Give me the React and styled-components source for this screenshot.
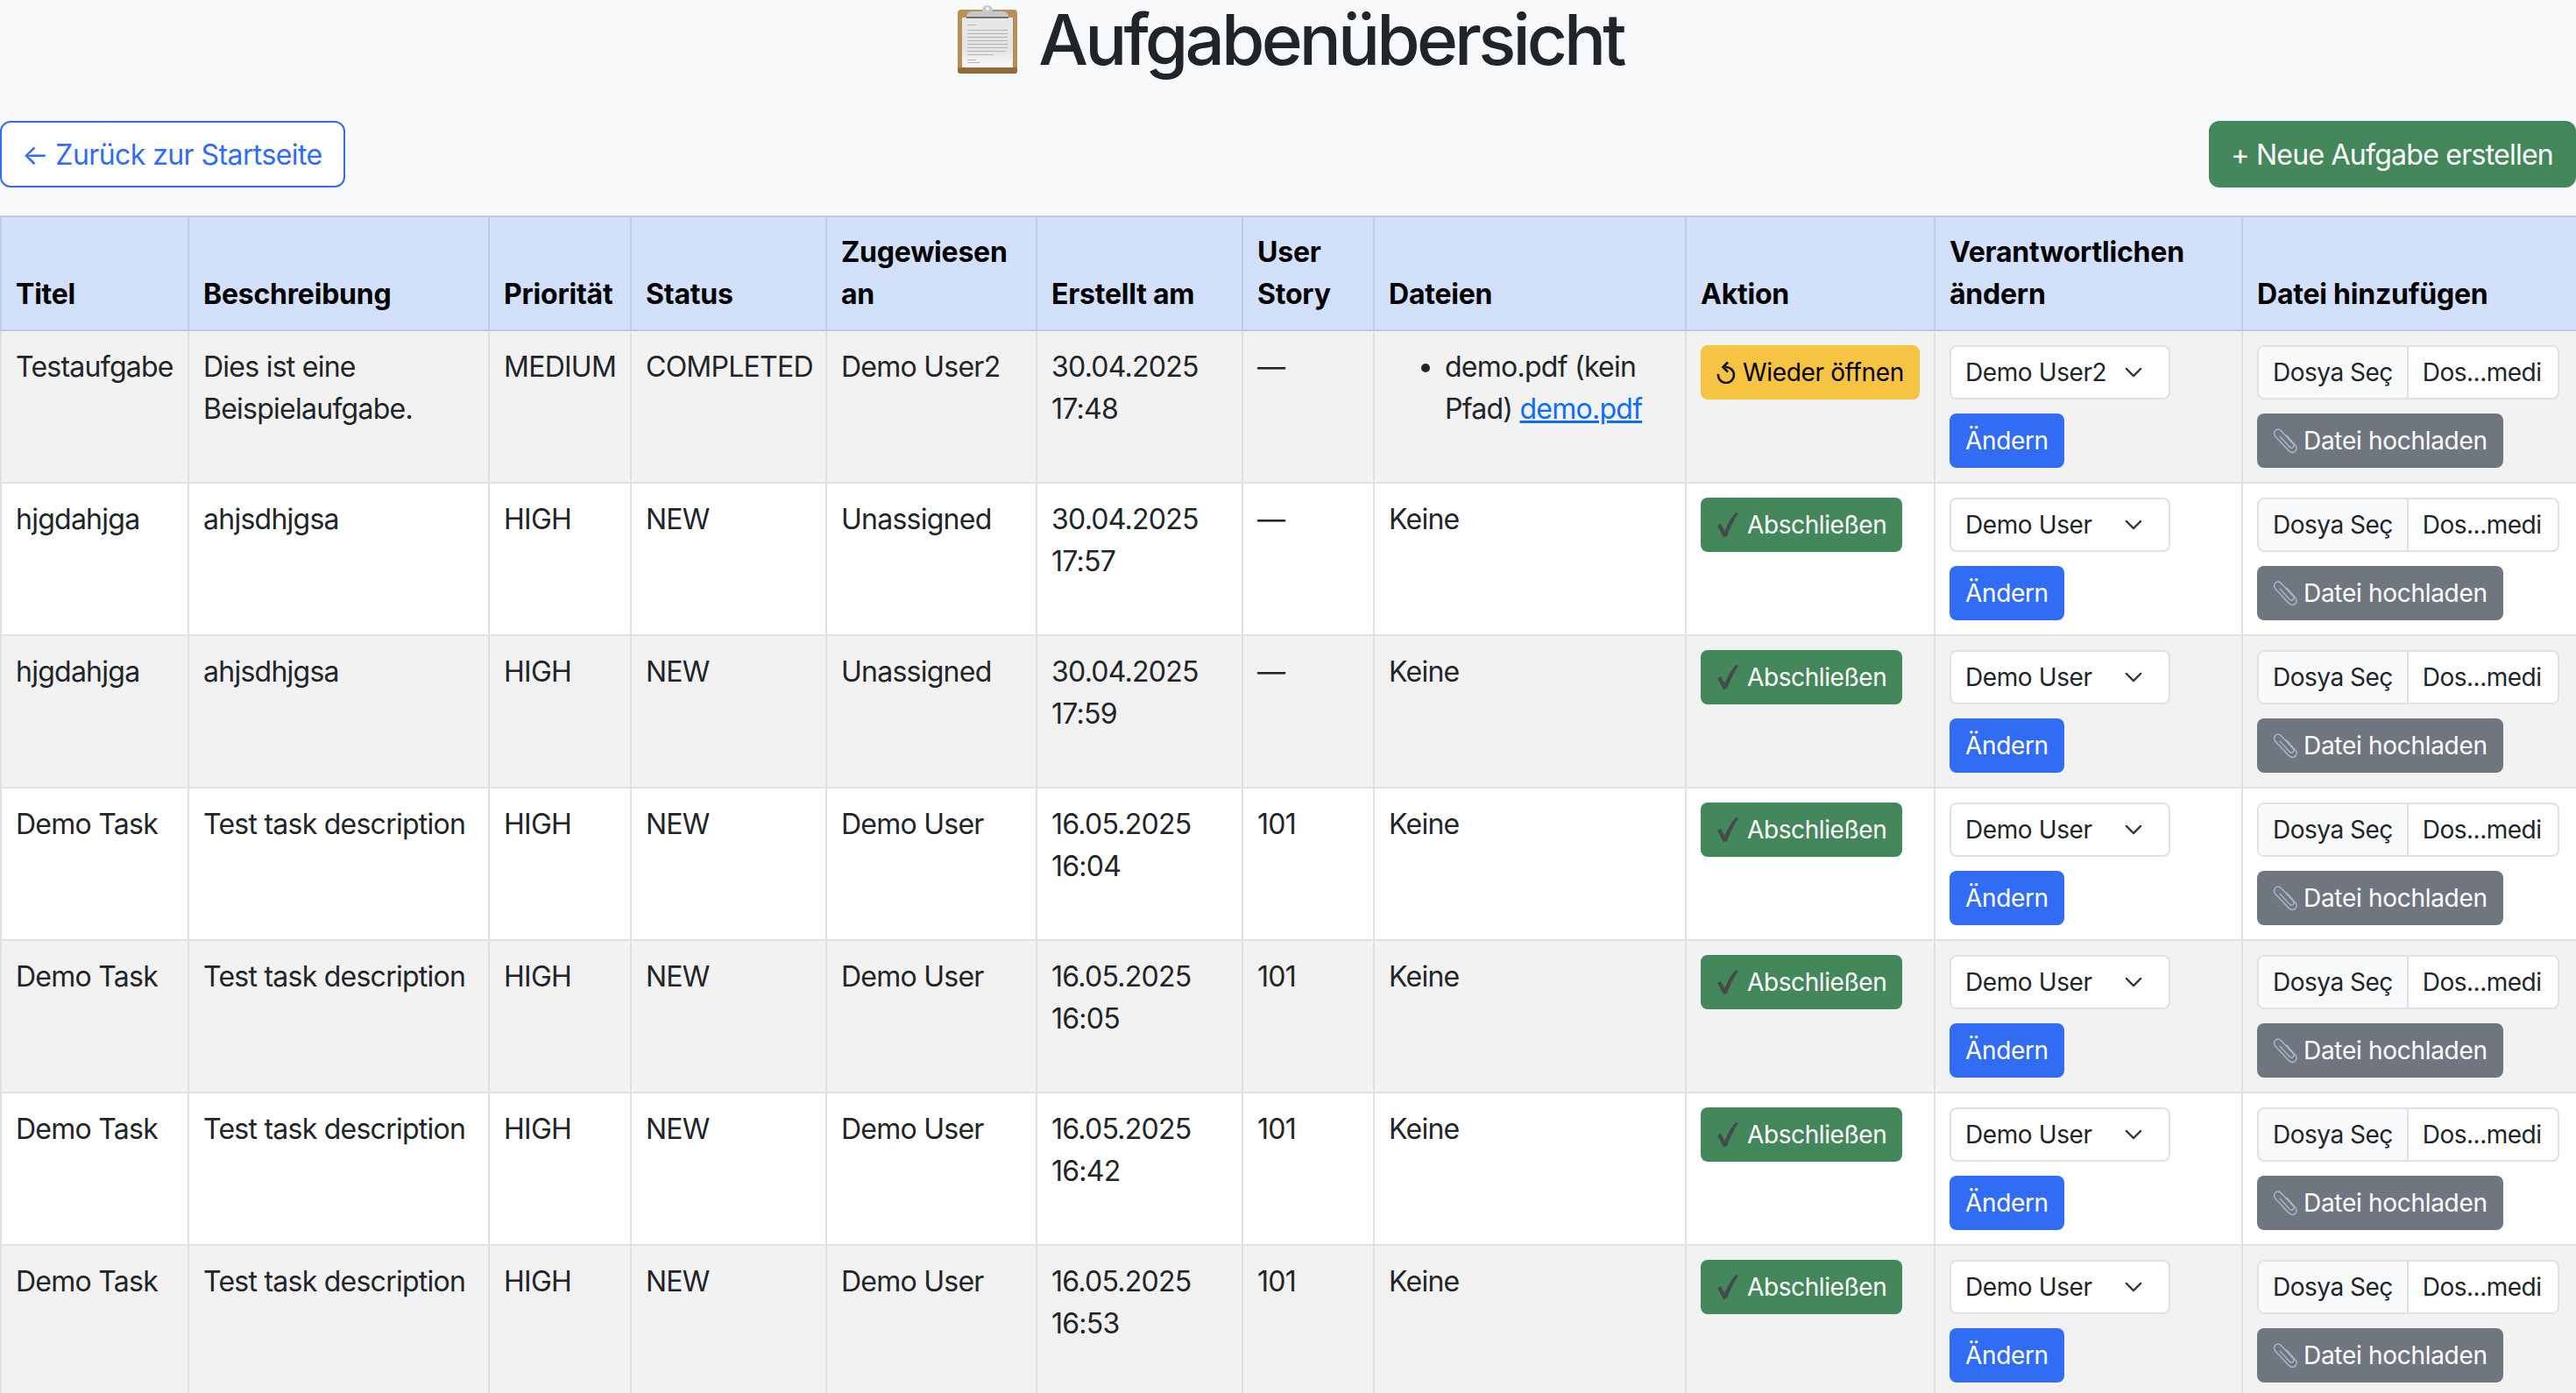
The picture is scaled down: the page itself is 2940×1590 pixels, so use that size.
import React from "react";
import styled, { createGlobalStyle } from "styled-components";

const Global = createGlobalStyle`
  html, body { margin: 0; padding: 0; height: 1590px; overflow: hidden; background: #f8f9fa; }
  body { font-family: Inter, "Liberation Sans", sans-serif; font-size: 32px; line-height: 48px; color: #212529; letter-spacing: -0.75px; }
  * { box-sizing: border-box; }
`;

const Page = styled.div`
  width: 2940px;
`;
const Title = styled.h1`
  margin: 0 0 42px;
  display: flex;
  justify-content: center;
  align-items: center;
  gap: 18px;
  height: 96px;
  padding-bottom: 6px;
  font-size: 80px;
  line-height: 96px;
  font-weight: 500;
  letter-spacing: -3.85px;
  color: #212529;
`;
const TopBar = styled.div`
  display: flex;
  justify-content: space-between;
  align-items: center;
  margin-bottom: 32px;
`;
const BigLink = styled.a`
  display: inline-block;
  padding: 13px 24px 11px 23px;
  border: 2px solid ${(p) => (p.$filled ? "#43875b" : "#316cf4")};
  border-radius: 12px;
  font-size: 32px;
  line-height: 48px;
  letter-spacing: ${(p) => (p.$filled ? "-0.75px" : "-0.58px")};
  background: ${(p) => (p.$filled ? "#43875b" : "#fff")};
  color: ${(p) => (p.$filled ? "#fff" : "#316cf4")};
`;
const Table = styled.table`
  width: 2940px;
  table-layout: fixed;
  border-collapse: collapse;
`;
const Head = styled.th`
  padding: 16px;
  background: #d2e0fb;
  border: 2px solid #bccbe6;
  text-align: left;
  vertical-align: bottom;
  font-weight: 700;
  letter-spacing: -0.22px;
  color: #000;
`;
const Row = styled.tr`
  background: ${(p) => (p.$odd ? "#f2f2f2" : "#fff")};
`;
const Cell = styled.td`
  padding: 17px 16px 15px;
  border: 2px solid #dee2e6;
  vertical-align: top;
`;
const ControlCell = styled.td`
  padding: 16px;
  border: 2px solid #dee2e6;
  vertical-align: top;
`;
const FileList = styled.ul`
  margin: 0;
  padding-left: 64px;
`;
const FileLink = styled.a`
  color: #0d6efd;
  text-decoration: underline;
`;
const SmallButton = styled.button`
  display: inline-flex;
  align-items: center;
  gap: ${(p) => p.$gap || "8px"};
  height: 62px;
  padding: 0 18px;
  border: 0;
  border-radius: 8px;
  font-family: inherit;
  font-size: 28px;
  line-height: 42px;
  letter-spacing: ${(p) => p.$track || "-0.35px"};
  white-space: nowrap;
  color: ${(p) => p.$color || "#fff"};
  background: ${(p) => p.$bg};
`;
const Stack = styled.div`
  display: flex;
  flex-direction: column;
  align-items: flex-start;
  gap: 16px;
`;
const SelectBox = styled.div`
  display: flex;
  align-items: center;
  justify-content: space-between;
  width: 252px;
  height: 62px;
  padding: 0 30px 0 16px;
  background: #fff;
  border: 2px solid #dee2e6;
  border-radius: 8px;
  font-size: 28px;
  letter-spacing: -0.4px;
`;
const FileInput = styled.div`
  display: flex;
  width: 345px;
  height: 62px;
  background: #fff;
  border: 2px solid #dee2e6;
  border-radius: 8px;
  overflow: hidden;
  font-size: 28px;
  letter-spacing: -0.5px;
  align-items: stretch;
`;
const FileChoose = styled.span`
  display: flex;
  align-items: center;
  padding: 0 16px;
  background: #f8f9fa;
  border-right: 2px solid #dee2e6;
  white-space: nowrap;
`;
const FileName = styled.span`
  display: flex;
  align-items: center;
  padding: 0 16px;
  white-space: nowrap;
`;
const Glyph = styled.svg`
  flex: none;
`;

const Clipboard = () => (
  <Glyph width="80" height="84" viewBox="0 0 80 84">
    <defs>
      <linearGradient id="paper" x1="0" y1="0" x2="0" y2="1">
        <stop offset="0" stopColor="#e8e8e8" />
        <stop offset="0.65" stopColor="#e4e4e4" />
        <stop offset="1" stopColor="#fafafa" />
      </linearGradient>
    </defs>
    <rect x="6" y="8" width="68" height="73" rx="4" fill="#b98f55" />
    <rect x="6" y="74" width="68" height="7" rx="3" fill="#8f6a3a" />
    <rect x="11" y="17" width="58" height="57" fill="url(#paper)" />
    <rect x="24" y="11" width="32" height="3" fill="#7da3cf" />
    <path d="M16 17 q0 -7 7 -7 h11 q0 -7 6 -7 q6 0 6 7 h11 q7 0 7 7 z" fill="#c4c8cc" />
    <circle cx="40" cy="7" r="2" fill="#f3f3f3" />
    <rect x="16" y="16" width="48" height="2" fill="#77706a" />
    <g fill="#b4b4b4">
      <rect x="17" y="25" width="10" height="1" />
      <rect x="17" y="31" width="46" height="1" />
      <rect x="17" y="35" width="46" height="1" />
      <rect x="17" y="39" width="46" height="1" />
      <rect x="17" y="43" width="46" height="1" />
      <rect x="17" y="47" width="46" height="1" />
      <rect x="17" y="51" width="46" height="1" />
      <rect x="17" y="55" width="44" height="1" />
      <rect x="17" y="59" width="30" height="1" />
      <rect x="17" y="65" width="10" height="1" />
      <rect x="17" y="68" width="14" height="1" />
    </g>
  </Glyph>
);
const Reload = () => (
  <Glyph width="22" height="26" viewBox="0 0 22 26" fill="none" stroke="#111" strokeWidth="2.6">
    <path d="M10 7 A9 9 0 1 1 2 15" />
    <path d="M13 1.5 L7.5 7 L13 12.5" />
  </Glyph>
);
const Check = () => (
  <Glyph width="26" height="32" viewBox="0 0 26 32">
    <path d="M1 17 L5 15 L9.5 23 Q14 11 22 2 L25 3 Q17 15 12 29 L8 30 Z" fill="#474a4c" />
  </Glyph>
);
const Clip = () => (
  <Glyph width="29" height="29" viewBox="0 0 30 30" fill="none" stroke="#a9b6c4" strokeWidth="1.5">
    <path d="M8 9 L20 22 Q22 24 24 22 Q26 20 24 18 L10 3 Q6 -0.5 3 2.5 Q0 5.5 3 9.5 L19 26.5 Q23 30 26.5 27 Q29.5 24 27 20.5 L16 8" />
  </Glyph>
);
const Chevron = () => (
  <Glyph width="20" height="13" viewBox="0 0 22 14" fill="none" stroke="#343a40" strokeWidth="2.6" strokeLinecap="round" strokeLinejoin="round">
    <path d="M2 2 L11 11 L20 2" />
  </Glyph>
);

const widths = [214, 343, 162, 223, 240, 235, 150, 356, 284, 351, 382];
const heads = ["Titel", "Beschreibung", "Priorität", "Status", "Zugewiesen an", "Erstellt am", "User Story", "Dateien", "Aktion", "Verantwortlichen ändern", "Datei hinzufügen"];
const base = { title: "Demo Task", desc: "Test task description", prio: "HIGH", status: "NEW", who: "Demo User", story: "101" };
const rows = [
  { title: "Testaufgabe", desc: "Dies ist eine Beispielaufgabe.", prio: "MEDIUM", status: "COMPLETED", who: "Demo User2", date: "30.04.2025 17:48", story: "—", file: true, done: true, sel: "Demo User2" },
  { title: "hjgdahjga", desc: "ahjsdhjgsa", prio: "HIGH", status: "NEW", who: "Unassigned", date: "30.04.2025 17:57", story: "—", sel: "Demo User" },
  { title: "hjgdahjga", desc: "ahjsdhjgsa", prio: "HIGH", status: "NEW", who: "Unassigned", date: "30.04.2025 17:59", story: "—", sel: "Demo User" },
  { ...base, date: "16.05.2025 16:04", sel: "Demo User" },
  { ...base, date: "16.05.2025 16:05", sel: "Demo User" },
  { ...base, date: "16.05.2025 16:42", sel: "Demo User" },
  { ...base, date: "16.05.2025 16:53", sel: "Demo User" },
];

export default function App() {
  return (
    <Page>
      <Global />
      <Title>
        <Clipboard />
        <span>Aufgabenübersicht</span>
      </Title>
      <TopBar>
        <BigLink>← Zurück zur Startseite</BigLink>
        <BigLink $filled>+ Neue Aufgabe erstellen</BigLink>
      </TopBar>
      <Table>
        <colgroup>
          {widths.map((w, i) => (
            <col key={i} width={w} />
          ))}
        </colgroup>
        <thead>
          <tr>
            {heads.map((h) => (
              <Head key={h}>{h}</Head>
            ))}
          </tr>
        </thead>
        <tbody>
          {rows.map((r, i) => (
            <Row key={i} $odd={i % 2 === 0}>
              <Cell>{r.title}</Cell>
              <Cell>{r.desc}</Cell>
              <Cell>{r.prio}</Cell>
              <Cell>{r.status}</Cell>
              <Cell>{r.who}</Cell>
              <Cell>{r.date}</Cell>
              <Cell>{r.story}</Cell>
              <Cell>
                {r.file ? (
                  <FileList>
                    <li>
                      demo.pdf (kein Pfad) <FileLink>demo.pdf</FileLink>
                    </li>
                  </FileList>
                ) : (
                  "Keine"
                )}
              </Cell>
              <ControlCell>
                {r.done ? (
                  <SmallButton $bg="#f6c343" $color="#000">
                    <Reload />
                    Wieder öffnen
                  </SmallButton>
                ) : (
                  <SmallButton $bg="#43875b" $gap="9px" $track="-0.4px">
                    <Check />
                    Abschließen
                  </SmallButton>
                )}
              </ControlCell>
              <ControlCell>
                <Stack>
                  <SelectBox>
                    {r.sel}
                    <Chevron />
                  </SelectBox>
                  <SmallButton $bg="#316cf4">Ändern</SmallButton>
                </Stack>
              </ControlCell>
              <ControlCell>
                <Stack>
                  <FileInput>
                    <FileChoose>Dosya Seç</FileChoose>
                    <FileName>Dos...medi</FileName>
                  </FileInput>
                  <SmallButton $bg="#6f767f" $gap="6px" $track="-0.3px">
                    <Clip />
                    Datei hochladen
                  </SmallButton>
                </Stack>
              </ControlCell>
            </Row>
          ))}
        </tbody>
      </Table>
    </Page>
  );
}
